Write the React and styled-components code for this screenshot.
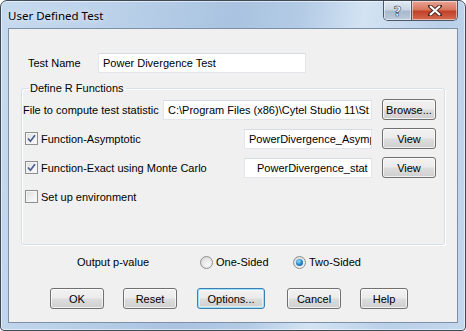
import styled, { createGlobalStyle, css } from 'styled-components';

const GlobalStyle = createGlobalStyle`
  html, body {
    margin: 0;
    padding: 0;
    background: #ffffff;
  }
  body {
    font-family: 'Liberation Sans', Arial, sans-serif;
    font-size: 11px;
    color: #000;
  }
`;

const Window = styled.div`
  width: 466px;
  height: 331px;
  box-sizing: border-box;
  border: 1px solid #3f4a57;
  border-radius: 7px 7px 4px 4px;
  background: linear-gradient(
    100deg,
    #c6daef 0%,
    #bcd2ea 20%,
    #a9c3e0 45%,
    #b3cbe5 58%,
    #d3e3f3 70%,
    #bad0e9 85%,
    #c3d7ed 100%
  );
  box-shadow: inset 0 0 0 1px rgba(255, 255, 255, 0.55);
  display: flex;
  flex-direction: column;
  overflow: hidden;
`;

const TitleBar = styled.div`
  height: 27px;
  display: flex;
  align-items: flex-start;
  padding-left: 7px;
  padding-right: 7px;
`;

const Title = styled.div`
  font-family: 'Noto Sans', 'Open Sans', sans-serif;
  font-size: 11.5px;
  line-height: 14px;
  margin-top: 8px;
  color: #000;
  flex: 1;
  text-shadow: 0 0 6px rgba(255, 255, 255, 0.9);
`;

const Caption = styled.div`
  display: flex;
  border: 1px solid #4b5766;
  border-top: none;
  border-radius: 0 0 5px 5px;
  overflow: hidden;
  height: 19px;
`;

const CaptionButton = styled.div`
  height: 19px;
  width: ${(p) => p.$w}px;
  display: flex;
  align-items: center;
  justify-content: center;
  box-shadow: inset 0 0 0 1px rgba(255, 255, 255, 0.5);
  ${(p) =>
    p.$close
      ? css`
          background: linear-gradient(#e8a393 0%, #d9775f 45%, #c2412a 55%, #d46b4f 100%);
        `
      : css`
          background: linear-gradient(#e2eaf3 0%, #cad6e4 45%, #a8b9cd 55%, #bccbdc 100%);
          border-right: 1px solid #4b5766;
        `}
`;

const HelpGlyph = styled.span`
  font-family: 'DejaVu Sans', sans-serif;
  font-weight: bold;
  font-size: 14px;
  color: #fff;
  -webkit-text-stroke: 0.6px #3c4756;
  line-height: 1;
`;

const Client = styled.div`
  flex: 1;
  margin: 0 7px 7px 7px;
  border: 1px solid #7d90a8;
  background: #f0f0f0;
  display: flex;
  flex-direction: column;
`;

const NameRow = styled.div`
  display: flex;
  align-items: center;
  margin-top: 24px;
  padding-left: 19px;
`;

const NameLabel = styled.span`
  width: 70px;
`;

const TextBox = styled.div`
  box-sizing: border-box;
  width: ${(p) => p.$w}px;
  height: 20px;
  background: #fff;
  border: 1px solid #e2e6eb;
  border-top-color: #d6dbe2;
  display: flex;
  align-items: center;
  padding-left: ${(p) => p.$indent || 4}px;
  white-space: nowrap;
  overflow: hidden;
`;

const Group = styled.fieldset`
  margin: 9px 0 0 12px;
  width: 424px;
  height: 163px;
  box-sizing: border-box;
  border: 1px solid #d5dfe5;
  box-shadow: inset 1px 1px 0 #fff, 1px 1px 0 #fff;
  border-radius: 3px;
  padding: 0 8px 0 1px;
  display: flex;
  flex-direction: column;
`;

const Legend = styled.legend`
  margin-left: 5px;
  padding: 0 2px;
  line-height: 13px;
`;

const FnRow = styled.div`
  height: 29px;
  display: flex;
  align-items: center;
`;

const RowLabel = styled.span`
  flex: 1;
  display: flex;
  align-items: center;
  gap: 3px;
  white-space: nowrap;
`;

const Button = styled.div`
  box-sizing: border-box;
  width: ${(p) => p.$w}px;
  height: 21px;
  margin-left: ${(p) => p.$ml || 0}px;
  border: 1px solid #707070;
  border-radius: 3px;
  background: linear-gradient(#f2f2f2 0%, #ebebeb 48%, #dddddd 52%, #cfcfcf 100%);
  box-shadow: inset 0 0 0 1px rgba(255, 255, 255, 0.7);
  display: flex;
  align-items: center;
  justify-content: center;
  ${(p) =>
    p.$focus &&
    css`
      border-color: #3c7fb1;
      box-shadow: inset 0 0 0 1px #9ee0f9, inset 0 0 0 2px rgba(255, 255, 255, 0.5);
    `}
`;

const Box = styled.span`
  box-sizing: border-box;
  width: 13px;
  height: 13px;
  border: 1px solid #8e8f8f;
  background: linear-gradient(135deg, #dcdcdc 0%, #f2f2f2 60%, #fcfcfc 100%);
  box-shadow: inset 0 0 0 1px #f4f4f4;
  display: inline-flex;
  align-items: center;
  justify-content: center;
  margin-left: 2px;
  flex: none;
`;

const PRow = styled.div`
  display: flex;
  align-items: center;
  margin-top: 10px;
  padding-left: 68px;
  height: 14px;
`;

const PLabel = styled.span`
  width: 123px;
`;

const Radio = styled.span`
  display: flex;
  align-items: center;
  gap: 3px;
  width: ${(p) => p.$w}px;
`;

const RadioDot = styled.span`
  box-sizing: border-box;
  width: 13px;
  height: 13px;
  border-radius: 50%;
  border: 1px solid #8e8f8f;
  background: radial-gradient(circle at 65% 70%, #f8f8f8 0%, #e8e8e8 50%, #cfcfcf 100%);
  display: inline-flex;
  align-items: center;
  justify-content: center;
  &::after {
    content: '';
    display: ${(p) => (p.$on ? 'block' : 'none')};
    width: 7px;
    height: 7px;
    border-radius: 50%;
    background: radial-gradient(circle at 40% 35%, #9be3ff 0%, #2c8fd4 45%, #0b3f7a 100%);
  }
`;

const ButtonRow = styled.div`
  display: flex;
  margin-top: 19px;
  padding-left: 41px;
`;

function Check({ checked }) {
  return (
    <Box>
      {checked && (
        <svg width="9" height="9" viewBox="0 0 9 9">
          <path d="M1 4.5 L3.4 7.2 L8 1.2" fill="none" stroke="#4a5e93" strokeWidth="1.7" />
        </svg>
      )}
    </Box>
  );
}

export default function App() {
  return (
    <>
      <GlobalStyle />
      <Window>
        <TitleBar>
          <Title>User Defined Test</Title>
          <Caption>
            <CaptionButton $w={27}>
              <HelpGlyph>?</HelpGlyph>
            </CaptionButton>
            <CaptionButton $w={45} $close>
              <svg width="14" height="11" viewBox="0 0 14 11">
                <path
                  d="M2 1 L12 10 M12 1 L2 10"
                  stroke="#4a2a24"
                  strokeWidth="4"
                  strokeLinecap="square"
                />
                <path d="M2 1 L12 10 M12 1 L2 10" stroke="#fff" strokeWidth="2.2" />
              </svg>
            </CaptionButton>
          </Caption>
        </TitleBar>
        <Client>
          <NameRow>
            <NameLabel>Test Name</NameLabel>
            <TextBox $w={208}>Power Divergence Test</TextBox>
          </NameRow>

          <Group>
            <Legend>Define R Functions</Legend>
            <FnRow>
              <RowLabel>File to compute test statistic</RowLabel>
              <TextBox $w={209}>C:\Program Files (x86)\Cytel Studio 11\St</TextBox>
              <Button $w={54} $ml={10}>Browse...</Button>
            </FnRow>
            <FnRow>
              <RowLabel>
                <Check checked />
                Function-Asymptotic
              </RowLabel>
              <TextBox $w={128}>PowerDivergence_Asymp</TextBox>
              <Button $w={54} $ml={10}>View</Button>
            </FnRow>
            <FnRow>
              <RowLabel>
                <Check checked />
                Function-Exact using Monte Carlo
              </RowLabel>
              <TextBox $w={128} $indent={12}>PowerDivergence_stat</TextBox>
              <Button $w={54} $ml={10}>View</Button>
            </FnRow>
            <FnRow>
              <RowLabel>
                <Check />
                Set up environment
              </RowLabel>
            </FnRow>
          </Group>

          <PRow>
            <PLabel>Output p-value</PLabel>
            <Radio $w={93}>
              <RadioDot />
              One-Sided
            </Radio>
            <Radio>
              <RadioDot $on />
              Two-Sided
            </Radio>
          </PRow>

          <ButtonRow>
            <Button $w={54}>OK</Button>
            <Button $w={54} $ml={19}>Reset</Button>
            <Button $w={68} $ml={20} $focus>Options...</Button>
            <Button $w={54} $ml={22}>Cancel</Button>
            <Button $w={48} $ml={19}>Help</Button>
          </ButtonRow>
        </Client>
      </Window>
    </>
  );
}
